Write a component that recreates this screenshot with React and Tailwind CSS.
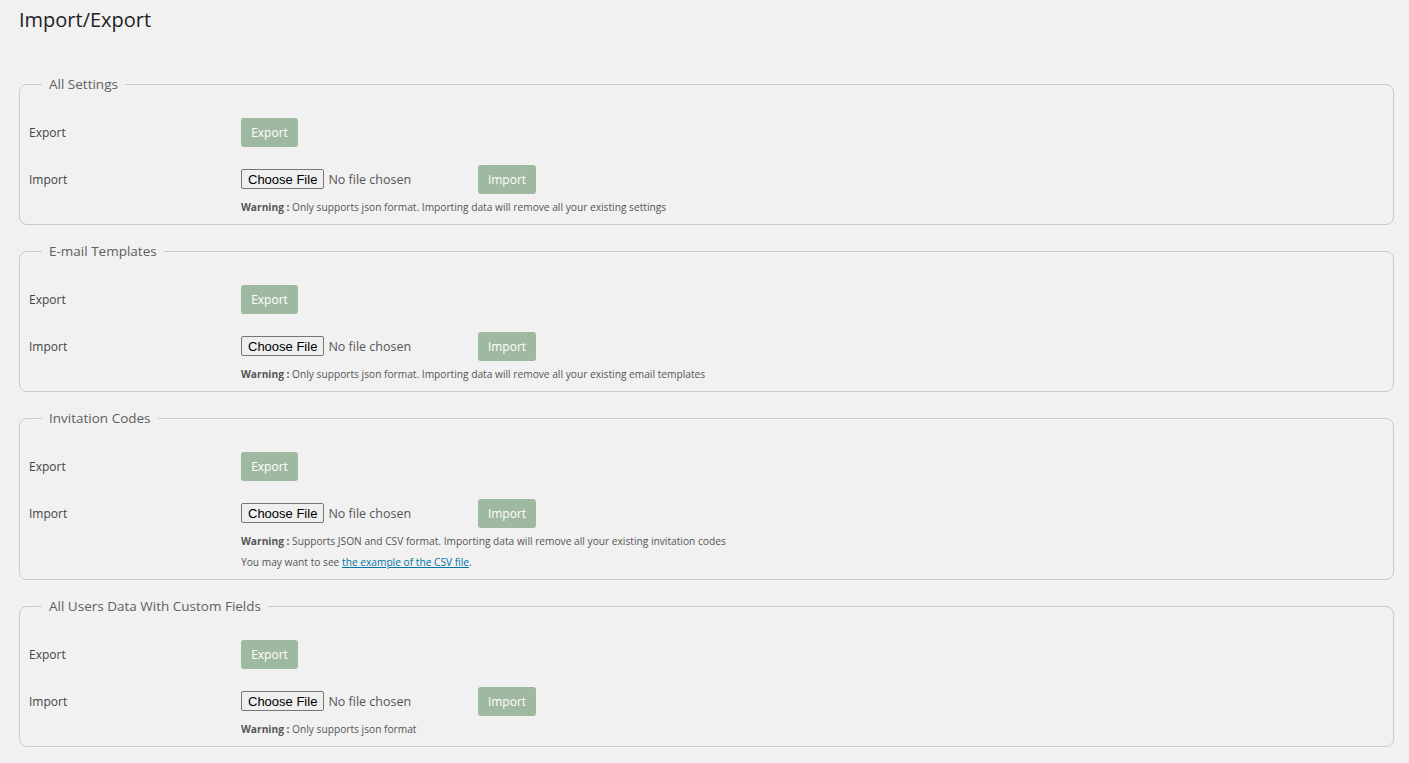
import React from 'react'

const sections = [
  {
    title: 'All Settings',
    warning: 'Only supports json format. Importing data will remove all your existing settings',
  },
  {
    title: 'E-mail Templates',
    warning: 'Only supports json format. Importing data will remove all your existing email templates',
  },
  {
    title: 'Invitation Codes',
    warning: 'Supports JSON and CSV format. Importing data will remove all your existing invitation codes',
    csv: true,
  },
  {
    title: 'All Users Data With Custom Fields',
    warning: 'Only supports json format',
  },
]

function Section({ title, warning, csv }) {
  return (
    <fieldset className="border border-[#c9c9c9] rounded-[8px] pl-[9px] pr-[9px] pb-[10px] mb-[17px]">
      <legend className="ml-[13px] px-[7px] text-[13.5px] leading-[18px] text-[#606060]">{title}</legend>

      {/* Export */}
      <div className="flex items-center mt-[25px] h-[29px]">
        <div className="w-[212px] text-[12px] pt-[1px] text-[#444]">Export</div>
        <button className="w-[57px] h-[29px] rounded-[3px] bg-[#9fb9a0] text-white text-[12px]">Export</button>
      </div>

      {/* Import */}
      <div className="flex items-center mt-[18px] h-[29px]">
        <div className="w-[212px] text-[12px] pt-[1px] text-[#444]">Import</div>
        <div className="w-[237px] flex items-center">
          <input
            type="file"
            className="text-[12.5px] text-[#555] w-[230px] file:font-['Liberation_Sans'] file:text-[13px] file:text-black file:bg-[#efefef] file:border file:border-[#767676] file:rounded-[2px] file:px-[6px] file:py-0 file:h-[20px] file:mr-[4px]"
          />
        </div>
        <button className="w-[58px] h-[29px] rounded-[3px] bg-[#9fb9a0] text-white text-[12px]">Import</button>
      </div>

      <div className="ml-[212px] mt-[6px] text-[10.2px] leading-[14px] text-[#555]">
        <span className="font-bold">Warning :</span> {warning}
      </div>
      {csv && (
        <div className="ml-[212px] mt-[7px] text-[10.2px] leading-[14px] text-[#555]">
          You may want to see{' '}
          <a href="#" className="text-[#0073aa] underline">the example of the CSV file</a>.
        </div>
      )}
    </fieldset>
  )
}

export default function App() {
  return (
    <div className="min-h-screen bg-[#f1f1f1] font-['Open_Sans','Noto_Sans',sans-serif] pl-[19px] pr-[15px] pt-[6px] pb-[10px]">
      <h1 className="text-[20px] leading-[28px] text-[#1d2327] mb-[41px]">Import/Export</h1>
      {sections.map((s) => (
        <Section key={s.title} {...s} />
      ))}
    </div>
  )
}
